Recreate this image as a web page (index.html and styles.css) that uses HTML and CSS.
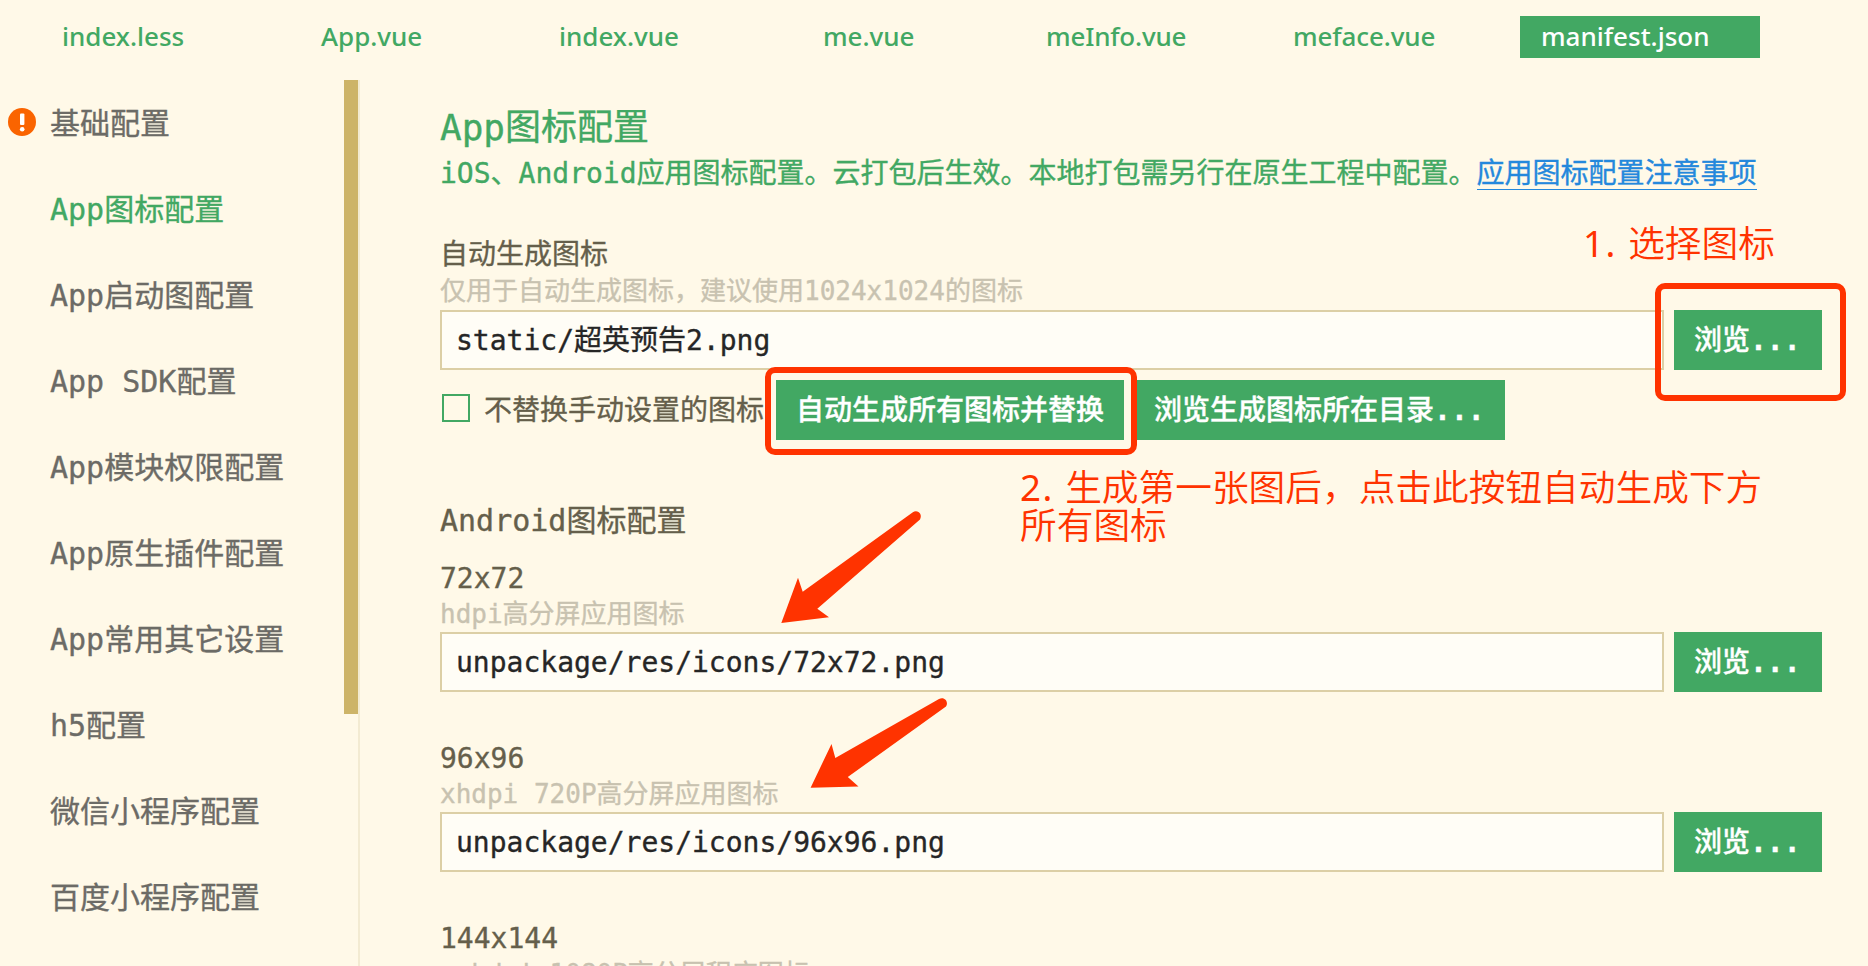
FILE: index.html
```html
<!DOCTYPE html>
<html lang="zh-CN">
<head>
<meta charset="utf-8">
<title>manifest.json</title>
<link rel="stylesheet" href="styles.css">
</head>
<body>
<nav class="tabs">
  <span class="tab tab-less">index.less</span>
  <span class="tab tab-app">App.vue</span>
  <span class="tab tab-index">index.vue</span>
  <span class="tab tab-me">me.vue</span>
  <span class="tab tab-info">meInfo.vue</span>
  <span class="tab tab-face">meface.vue</span>
  <span class="tab tab-active">manifest.json</span>
</nav>
<div class="body">
  <aside class="sidebar">
    <ul class="menu">
      <li class="menu-item"><svg class="warn" viewBox="0 0 28 28"><circle cx="14" cy="14" r="14"/><rect x="12" y="5.5" width="4.4" height="11.5" rx="1"/><circle class="dot" cx="14.2" cy="21.2" r="2.3"/></svg>基础配置</li>
      <li class="menu-item active">App图标配置</li>
      <li class="menu-item">App启动图配置</li>
      <li class="menu-item">App SDK配置</li>
      <li class="menu-item">App模块权限配置</li>
      <li class="menu-item">App原生插件配置</li>
      <li class="menu-item">App常用其它设置</li>
      <li class="menu-item">h5配置</li>
      <li class="menu-item">微信小程序配置</li>
      <li class="menu-item">百度小程序配置</li>
    </ul>
    <div class="scrollbar"></div>
  </aside>
  <main class="content">
    <h1 class="title">App图标配置</h1>
    <p class="intro">iOS、Android应用图标配置。云打包后生效。本地打包需另行在原生工程中配置。<a class="link">应用图标配置注意事项</a></p>
    <section class="field field-auto">
      <div class="label">自动生成图标</div>
      <div class="hint">仅用于自动生成图标，建议使用1024x1024的图标</div>
      <div class="row"><div class="input">static/超英预告2.png</div><div class="btn browse">浏览<b>...</b></div></div>
    </section>
    <div class="actions">
      <span class="checkbox"></span>
      <span class="check-label">不替换手动设置的图标</span>
      <div class="btn">自动生成所有图标并替换</div>
      <div class="btn">浏览生成图标所在目录<b>...</b></div>
    </div>
    <h2 class="subtitle">Android图标配置</h2>
    <section class="field">
      <div class="label">72x72</div>
      <div class="hint">hdpi高分屏应用图标</div>
      <div class="row"><div class="input">unpackage/res/icons/72x72.png</div><div class="btn browse">浏览<b>...</b></div></div>
    </section>
    <section class="field">
      <div class="label">96x96</div>
      <div class="hint">xhdpi 720P高分屏应用图标</div>
      <div class="row"><div class="input">unpackage/res/icons/96x96.png</div><div class="btn browse">浏览<b>...</b></div></div>
    </section>
    <section class="field">
      <div class="label">144x144</div>
      <div class="hint">xxhdpi 1080P高分屏程序图标</div>
    </section>
  </main>
</div>
<div class="mark mark-browse"></div>
<div class="mark mark-generate"></div>
<div class="note note-one"><span class="num">1. </span>选择图标</div>
<div class="note note-two"><span class="num">2. </span>生成第一张图后，点击此按钮自动生成下方<br>所有图标</div>
<svg class="arrows" viewBox="0 0 1868 966">
  <path d="M781.3 623 L798 577.7 L802.7 591.7 L912.5 512.5 C917.5 509 923 514 920 519.5 L817.3 608.7 L829 617.3 Z"/>
  <path d="M810.6 787.7 L831.5 744 L835.3 758 L939 699 C944.5 696 949 702 946 706.5 L847.8 777 L858.5 786.5 Z"/>
</svg>
</body>
</html>
```
FILE: styles.css
```css
* { box-sizing: border-box; }
body {
  margin: 0;
  width: 1868px;
  height: 966px;
  position: relative;
  overflow: hidden;
  background: #fff9e8;
  font-family: "DejaVu Sans Mono", "Noto Sans CJK SC", monospace;
  font-size: 28px;
  color: #655f4b;
  white-space: nowrap;
}
.tabs {
  display: flex;
  height: 80px;
  padding: 16px 0 0 62px;
  font-family: "Noto Sans", sans-serif;
  font-size: 26px;
  line-height: 40px;
  color: #42a863;
}
.tab { height: 42px; font-weight: 500; }
.tab-less { width: 259px; }
.tab-app { width: 238px; }
.tab-index { width: 264px; }
.tab-me { width: 223px; }
.tab-info { width: 247px; letter-spacing: -0.2px; }
.tab-face { width: 227px; letter-spacing: -0.1px; }
.tab-active { width: 240px; padding-left: 21px; background: #42a863; color: #fff; }

.body { display: flex; height: 886px; -webkit-text-stroke: 0.35px currentColor; }
.sidebar {
  display: flex;
  justify-content: space-between;
  width: 360px;
  border-right: 2px solid #f3ebd2;
}
.menu { margin: 0; padding: 1px 0 0 50px; list-style: none; font-size: 30px; color: #6c6b66; }
.menu-item { position: relative; height: 86px; line-height: 86px; }
.menu-item.active { color: #42a863; }
.warn { position: absolute; left: -42px; top: 27px; width: 28px; height: 28px; fill: #fa6400; }
.warn rect, .warn .dot { fill: #fff; }
.scrollbar { width: 14px; height: 634px; background: #cdb468; }

.content { width: 1462px; padding: 21px 0 0 80px; overflow: hidden; }
.title { margin: 0; height: 52px; line-height: 54px; font-size: 36px; font-weight: 400; color: #42a863; }
.intro { margin: 0; height: 40px; line-height: 41px; color: #42a863; }
.link { display: inline-block; height: 37px; color: #2488dc; border-bottom: 1px solid #2488dc; }
.field { height: 180px; }
.field-auto { padding-top: 43px; height: 187px; }
.field-auto .hint { height: 38px; line-height: 39px; }
.label { height: 36px; line-height: 37px; }
.hint { height: 36px; line-height: 36px; font-size: 26px; color: #c8c2b0; }
.row { display: flex; gap: 10px; }
.input {
  width: 1224px;
  height: 60px;
  padding-left: 14px;
  line-height: 58px;
  border: 2px solid #dccfa6;
  background: #fffdf6;
  color: #262626;
}
.btn { height: 60px; padding: 0 20px; line-height: 62px; background: #42a863; color: #fff; font-weight: 500; }
.btn b { font-weight: 700; }
.browse { width: 148px; }
.actions { display: flex; align-items: center; height: 60px; padding-left: 2px; }
.actions .btn + .btn { margin-left: 10px; }
.checkbox { width: 28px; height: 28px; margin: -4px 14px 0 0; border: 2px solid #42a863; }
.check-label { width: 292px; line-height: 61px; height: 60px; }
.subtitle { margin: 60px 0 0; height: 60px; line-height: 41px; font-size: 30px; font-weight: 400; }

.mark { position: absolute; border: 6px solid #ff3300; border-radius: 10px; }
.mark-browse { left: 1655px; top: 283px; width: 191px; height: 118px; }
.mark-generate { left: 765px; top: 367px; width: 372px; height: 88px; }
.note {
  position: absolute;
  font-family: "Noto Sans", "Noto Sans CJK SC", sans-serif;
  font-size: 36.7px;
  font-weight: 350;
  line-height: 38px;
  color: #ff3300;
}
.num { letter-spacing: 1.6px; font-weight: 400; }
.note-one { left: 1583px; top: 224px; }
.note-two { left: 1020px; top: 468px; }
.arrows { position: absolute; left: 0; top: 0; width: 1868px; height: 966px; fill: #ff3300; pointer-events: none; }
```
